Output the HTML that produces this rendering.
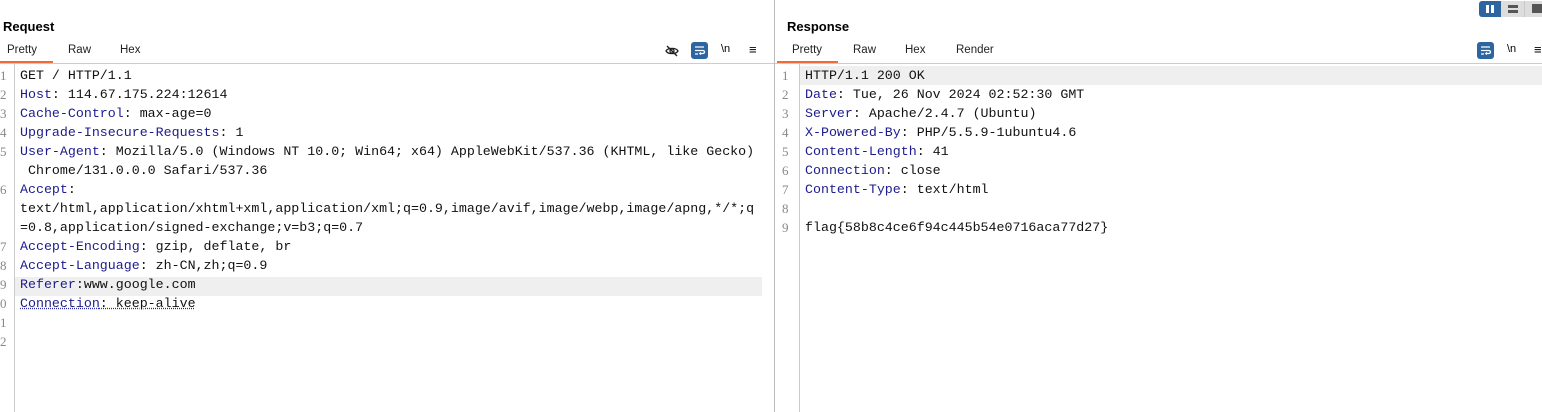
<!DOCTYPE html>
<html><head><meta charset="utf-8"><style>
*{margin:0;padding:0;box-sizing:border-box}
body{width:1542px;height:412px;background:#fff;position:relative;overflow:hidden;font-family:"Liberation Sans",sans-serif;color:#000}
.a{position:absolute}
.t{font-weight:bold;font-size:13px}
.tab{font-size:11.5px;color:#222}
.code{font-family:"Liberation Mono","Noto Sans CJK SC",monospace;font-size:13.3px;line-height:19px;white-space:pre;color:#111}
.ln{font-family:"Liberation Serif",serif;font-size:13px;line-height:19px;color:#888;white-space:pre}
.k{color:#1c1c8e}
.u{text-decoration:underline dotted #2a2ab0}
</style></head><body>
<!-- left -->
<div class="a t" style="left:3px;top:19px">Request</div>
<div class="a tab" style="left:7px;top:44px">Pretty</div>
<div class="a tab" style="left:68px;top:44px">Raw</div>
<div class="a tab" style="left:120px;top:44px">Hex</div>
<div class="a" style="left:0;top:61px;width:53px;height:2px;background:#f26a36"></div>
<div class="a" style="left:0;top:63px;width:774px;height:1px;background:#ccc"></div>
<svg class="a" style="left:665px;top:44px" width="14" height="14" viewBox="0 0 14 14" fill="none" stroke="#222" stroke-width="1.3"><path d="M1 7C3 3.5 11 3.5 13 7C11 10.5 3 10.5 1 7Z"/><circle cx="7" cy="7" r="2"/><path d="M2 2L12 12"/></svg>
<div class="a" style="left:691px;top:42px;width:17px;height:17px;background:#2d65a0;border-radius:3px"></div>
<svg class="a" style="left:691px;top:42px" width="17" height="17" viewBox="0 0 17 17" fill="none" stroke="#fff" stroke-width="1.3"><path d="M4 5H13M4 8.5H12a1.5 1.5 0 0 1 0 3H9M4 12H7M10 10.5L8.8 11.5L10 12.5"/></svg>
<div class="a" style="left:721px;top:43px;font-size:11px">\n</div>
<div class="a" style="left:749px;top:42px;font-size:13px">≡</div>
<div class="a" style="left:14px;top:64px;width:1px;height:348px;background:#ccc"></div>
<div class="a" style="left:15px;top:277px;width:747px;height:19px;background:#efefef"></div>
<div class="a ln" style="left:0;top:66px">1
2
3
4
5

6


7
8
9
0
1
2</div>
<div class="a code" style="left:20px;top:66px">GET / HTTP/1.1
<span class="k">Host</span>: 114.67.175.224:12614
<span class="k">Cache-Control</span>: max-age=0
<span class="k">Upgrade-Insecure-Requests</span>: 1
<span class="k">User-Agent</span>: Mozilla/5.0 (Windows NT 10.0; Win64; x64) AppleWebKit/537.36 (KHTML, like Gecko)
 Chrome/131.0.0.0 Safari/537.36
<span class="k">Accept</span>:
text/html,application/xhtml+xml,application/xml;q=0.9,image/avif,image/webp,image/apng,*/*;q
=0.8,application/signed-exchange;v=b3;q=0.7
<span class="k">Accept-Encoding</span>: gzip, deflate, br
<span class="k">Accept-Language</span>: zh-CN,zh;q=0.9
<span class="k">Referer</span>:www.google.com
<span class="u"><span class="k">Connection</span>: keep-alive</span></div>
<div class="a" style="left:774px;top:0;width:1px;height:412px;background:#bbb"></div>
<!-- right -->
<div class="a t" style="left:787px;top:19px">Response</div>
<div class="a tab" style="left:792px;top:44px">Pretty</div>
<div class="a tab" style="left:853px;top:44px">Raw</div>
<div class="a tab" style="left:905px;top:44px">Hex</div>
<div class="a tab" style="left:956px;top:44px">Render</div>
<div class="a" style="left:777px;top:61px;width:61px;height:2px;background:#f26a36"></div>
<div class="a" style="left:775px;top:63px;width:767px;height:1px;background:#ccc"></div>
<div class="a" style="left:1479px;top:1px;width:22px;height:16px;background:#2d65a0;border-radius:3px 0 0 3px"></div>
<div class="a" style="left:1486px;top:5px;width:3px;height:8px;background:#fff"></div>
<div class="a" style="left:1491px;top:5px;width:3px;height:8px;background:#fff"></div>
<div class="a" style="left:1501px;top:1px;width:41px;height:16px;background:#ddd"></div>
<div class="a" style="left:1524px;top:1px;width:1px;height:16px;background:#c8c8c8"></div>
<div class="a" style="left:1508px;top:5px;width:10px;height:3px;background:#555"></div>
<div class="a" style="left:1508px;top:10px;width:10px;height:3px;background:#555"></div>
<div class="a" style="left:1532px;top:4px;width:10px;height:9px;background:#555"></div>
<div class="a" style="left:1477px;top:42px;width:17px;height:17px;background:#2d65a0;border-radius:3px"></div>
<svg class="a" style="left:1477px;top:42px" width="17" height="17" viewBox="0 0 17 17" fill="none" stroke="#fff" stroke-width="1.3"><path d="M4 5H13M4 8.5H12a1.5 1.5 0 0 1 0 3H9M4 12H7M10 10.5L8.8 11.5L10 12.5"/></svg>
<div class="a" style="left:1507px;top:43px;font-size:11px">\n</div>
<div class="a" style="left:1534px;top:42px;font-size:13px">≡</div>
<div class="a" style="left:799px;top:64px;width:1px;height:348px;background:#ccc"></div>
<div class="a" style="left:800px;top:66px;width:742px;height:19px;background:#efefef"></div>
<div class="a ln" style="left:782px;top:66px">1
2
3
4
5
6
7
8
9</div>
<div class="a code" style="left:805px;top:66px">HTTP/1.1 200 OK
<span class="k">Date</span>: Tue, 26 Nov 2024 02:52:30 GMT
<span class="k">Server</span>: Apache/2.4.7 (Ubuntu)
<span class="k">X-Powered-By</span>: PHP/5.5.9-1ubuntu4.6
<span class="k">Content-Length</span>: 41
<span class="k">Connection</span>: close
<span class="k">Content-Type</span>: text/html

flag{58b8c4ce6f94c445b54e0716aca77d27}</div>
</body></html>
